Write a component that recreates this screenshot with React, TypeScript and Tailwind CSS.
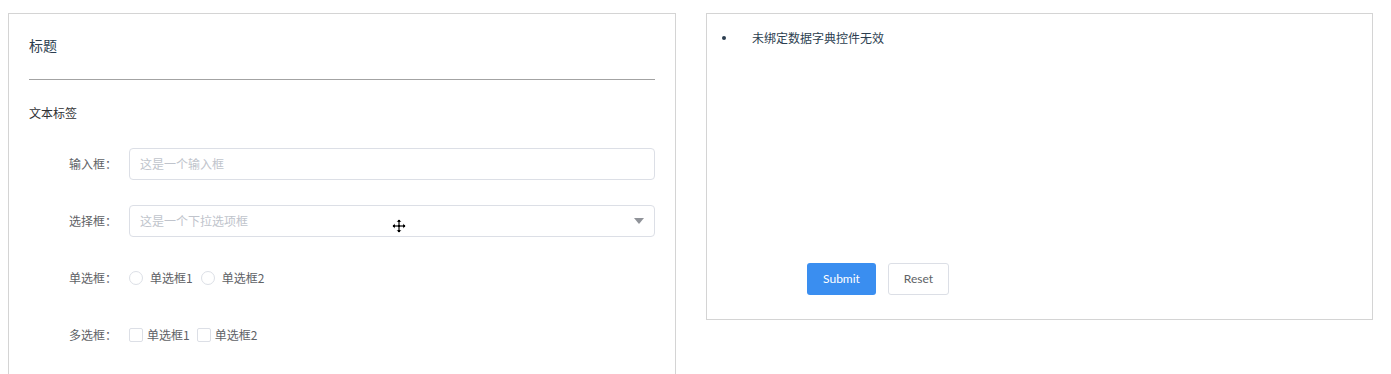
import React from "react";

const font = { fontFamily: '"Noto Sans CJK SC", "Noto Sans", sans-serif' };

function Row({ label, children }: { label: string; children: React.ReactNode }) {
  return (
    <div className="flex items-center h-[32px]">
      <div className="w-[100px] pr-[12px] text-right text-[12px] text-[#606266] shrink-0">{label}</div>
      <div className="flex-1 flex items-center h-full">{children}</div>
    </div>
  );
}

function MoveCursor() {
  return (
    <svg width="16" height="16" viewBox="0 0 16 16" className="absolute left-[391px] top-[218px]">
      <path
        d="M8 1 L11 4 L9 4 L9 7 L12 7 L12 5 L15 8 L12 11 L12 9 L9 9 L9 12 L11 12 L8 15 L5 12 L7 12 L7 9 L4 9 L4 11 L1 8 L4 5 L4 7 L7 7 L7 4 L5 4 Z"
        fill="#000"
        stroke="#fff"
        strokeWidth="0.8"
      />
    </svg>
  );
}

export default function App() {
  return (
    <div className="relative h-[374px] w-[1391px] overflow-hidden bg-white" style={font}>
      <div className="flex items-start pl-[8px] pt-[13px] gap-[30px]">
        {/* Left panel */}
        <div className="w-[668px] h-[420px] border border-[#d4d4d4] px-[20px] pt-[21px] shrink-0">
          <div className="text-[14px] leading-[20px] text-[#2c3e50]">标题</div>
          <div className="mt-[24px] h-px bg-[#a3a3a3]" />
          <div className="mt-[24px] text-[12px] leading-[18px] text-[#303133]">文本标签</div>
          <div className="mt-[26px] flex flex-col gap-[25px]">
            <Row label="输入框：">
              <div className="w-full h-[32px] border border-[#dcdfe6] rounded-[4px] flex items-center px-[10px] text-[12px] text-[#c0c4cc]">
                这是一个输入框
              </div>
            </Row>
            <Row label="选择框：">
              <div className="w-full h-[32px] border border-[#dcdfe6] rounded-[4px] flex items-center justify-between pl-[10px] pr-[10px] text-[12px] text-[#c0c4cc]">
                <span>这是一个下拉选项框</span>
                <svg width="10" height="6" viewBox="0 0 10 6">
                  <path d="M0 0 L10 0 L5 6 Z" fill="#909399" />
                </svg>
              </div>
            </Row>
            <Row label="单选框：">
              <div className="flex items-center text-[12px] text-[#606266]">
                <span className="w-[14px] h-[14px] rounded-full border border-[#dcdfe6]" />
                <span className="ml-[7px]">单选框1</span>
                <span className="ml-[8px] w-[14px] h-[14px] rounded-full border border-[#dcdfe6]" />
                <span className="ml-[7px]">单选框2</span>
              </div>
            </Row>
            <Row label="多选框：">
              <div className="flex items-center text-[12px] text-[#606266]">
                <span className="w-[14px] h-[14px] rounded-[2px] border border-[#dcdfe6]" />
                <span className="ml-[4px]">单选框1</span>
                <span className="ml-[7px] w-[14px] h-[14px] rounded-[2px] border border-[#dcdfe6]" />
                <span className="ml-[4px]">单选框2</span>
              </div>
            </Row>
          </div>
        </div>

        {/* Right panel */}
        <div className="w-[667px] h-[307px] border border-[#d4d4d4] shrink-0 flex flex-col">
          <div className="flex items-center pt-[15px] pl-[15px] text-[12px] leading-[18px] text-[#2c3e50]">
            <span className="w-[4px] h-[4px] rounded-full bg-[#2c3e50]" />
            <span className="ml-[26px]">未绑定数据字典控件无效</span>
          </div>
          <div className="flex-1" />
          <div className="flex pl-[100px] pb-[24px] gap-[12px]">
            <button className="w-[69px] h-[32px] rounded-[3px] bg-[#3a8ef0] text-white text-[12px]" style={{ fontFamily: 'Lato, "Noto Sans", sans-serif' }}>
              Submit
            </button>
            <button className="w-[61px] h-[32px] rounded-[3px] border border-[#dcdfe6] bg-white text-[#606266] text-[12px]" style={{ fontFamily: 'Lato, "Noto Sans", sans-serif' }}>
              Reset
            </button>
          </div>
        </div>
      </div>
      <MoveCursor />
    </div>
  );
}
